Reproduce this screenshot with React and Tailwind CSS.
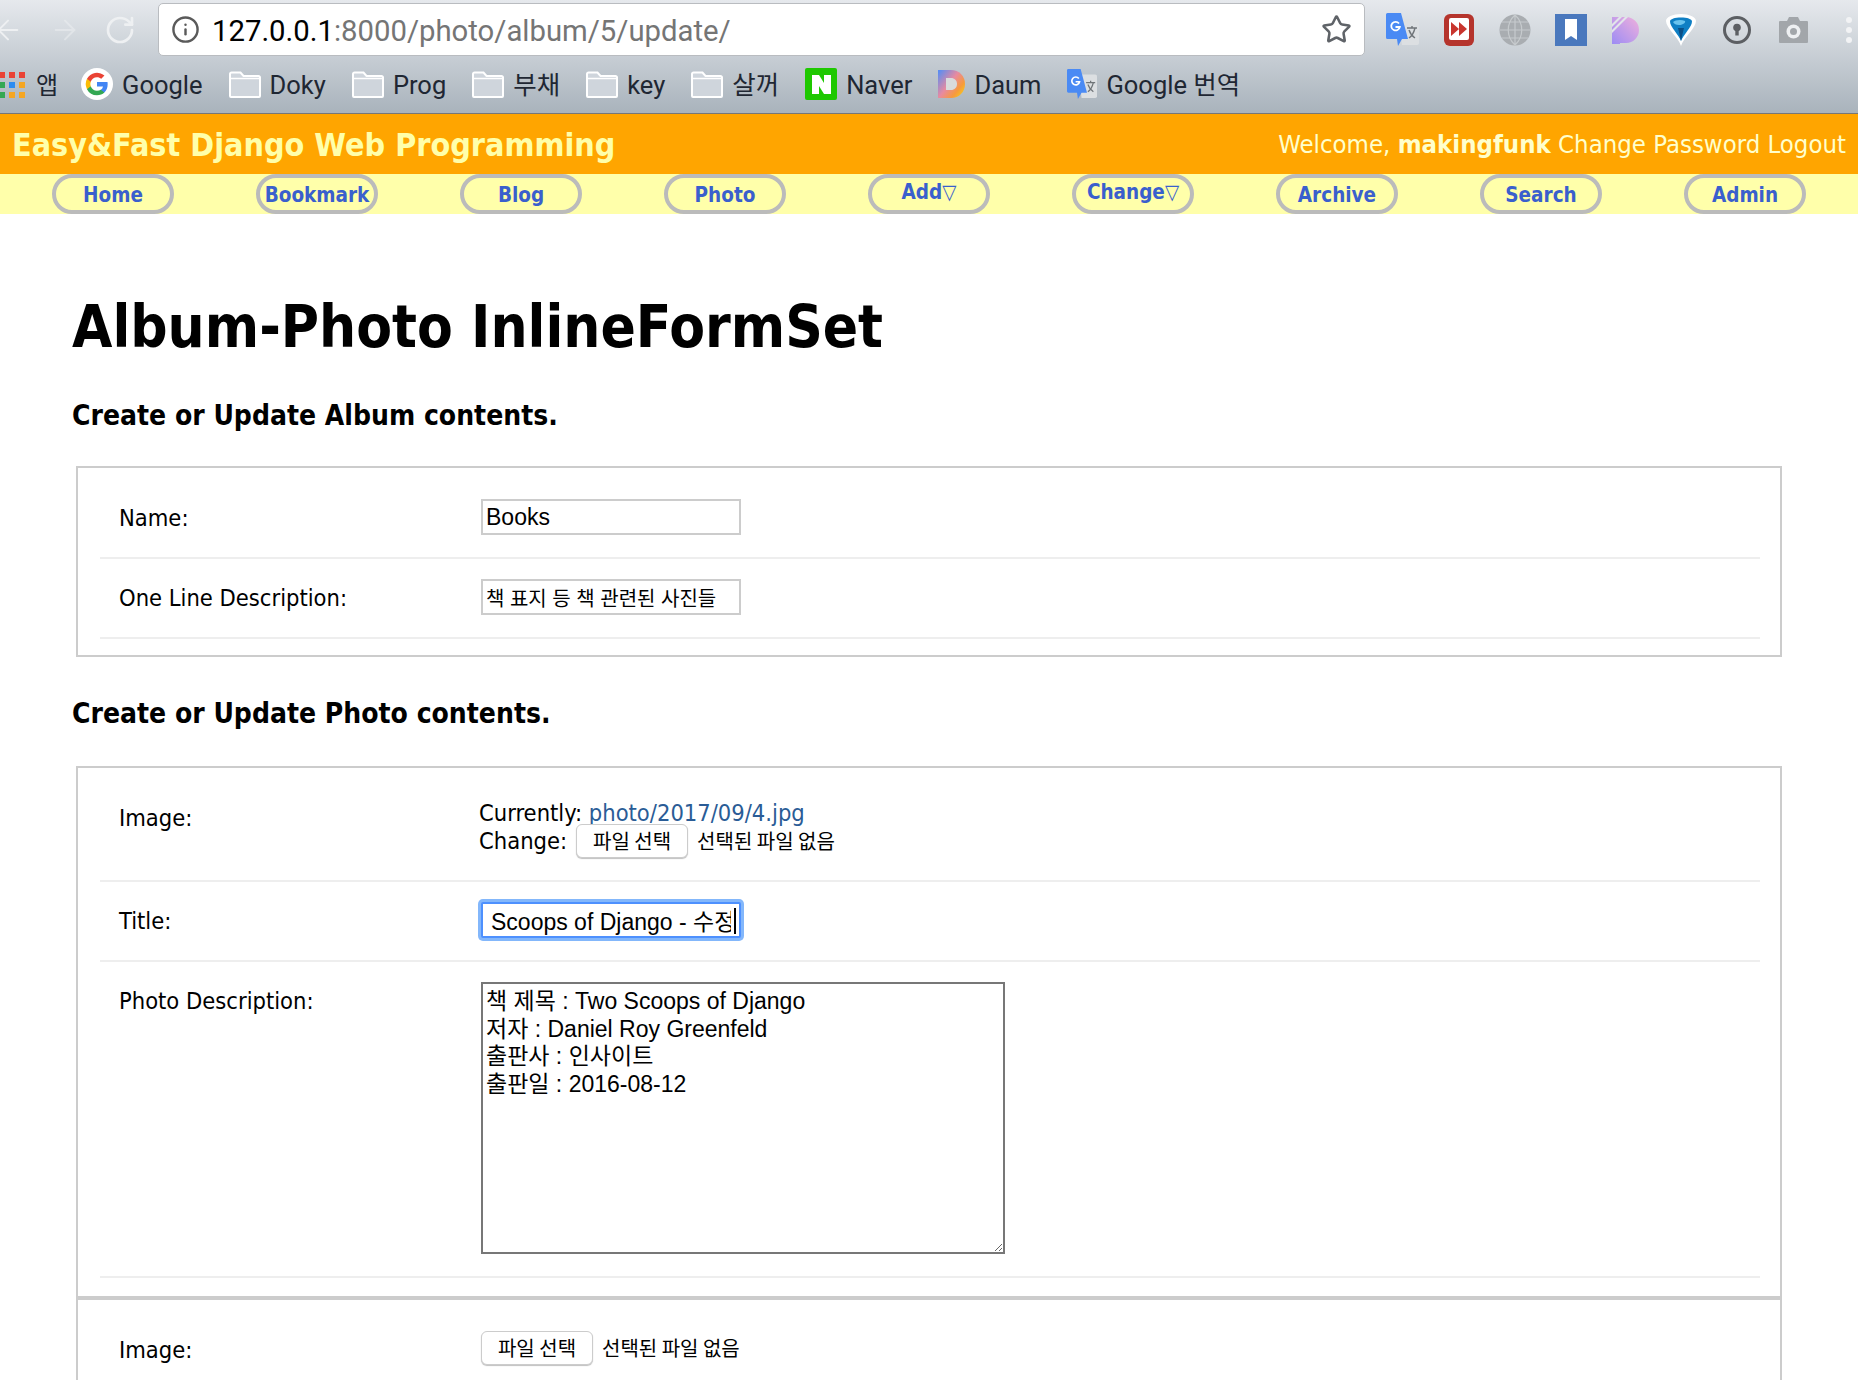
import React from "react";
import { ArrowLeft, ArrowRight, RotateCw, Star, Info } from "lucide-react";

const folderIcon = (
  <svg width="32" height="27" viewBox="0 0 32 27" className="shrink-0">
    <path d="M1 25V3a1.500 1.500 0 0 1 1.500-1.500h9l3 3.500h15A1.500 1.500 0 0 1 31 6.500V25a1 1 0 0 1-1 1H2a1 1 0 0 1-1-1z" fill="#cfd5dc" stroke="#fff" strokeWidth="2" />
    <path d="M1 7.500h30" stroke="#fff" strokeWidth="1.500" />
  </svg>
);

const TranslateIcon = ({ size = 33 }) => (
  <svg width={size} height={size} viewBox="0 0 33 33" className="shrink-0">
    <path d="M13 6h18a2 2 0 0 1 2 2v22a2 2 0 0 1-2 2H16z" fill="#dcdfe2" />
    <path d="M1.500 0H15l7 26H16l-4 7-1-7H1.500A1.500 1.500 0 0 1 0 24.500v-23A1.500 1.500 0 0 1 1.500 0z" fill="#4a8af4" />
    <path d="M13 10.500a4.300 4.300 0 1 0 .8 3.500H9.500" fill="none" stroke="#fff" strokeWidth="1.800" />
    <path d="M21 15h10M26 13v2M23 25c3-2 5-6 6-10M23 17c1 3 3 6 6 8" fill="none" stroke="#6f7478" strokeWidth="1.400" />
  </svg>
);

const GoogleIcon = () => (
  <svg width="32" height="32" viewBox="0 0 48 48" className="shrink-0">
    <circle cx="24" cy="24" r="24" fill="#fff" />
    <path d="M40 24.500c0-1.200-.1-2.300-.3-3.400H24v6.500h9a7.700 7.700 0 0 1-3.300 5v4.200h5.400c3.100-2.900 4.900-7.100 4.900-12.300z" fill="#4285f4" />
    <path d="M24 41c4.500 0 8.300-1.500 11.100-4.100l-5.400-4.200c-1.500 1-3.400 1.600-5.700 1.600-4.400 0-8.100-3-9.400-6.900H9v4.300A17 17 0 0 0 24 41z" fill="#34a853" />
    <path d="M14.600 27.400a10 10 0 0 1 0-6.800v-4.300H9a17 17 0 0 0 0 15.400z" fill="#fbbc05" />
    <path d="M24 13.700c2.500 0 4.700.9 6.400 2.500l4.800-4.800A17 17 0 0 0 9 16.300l5.600 4.300c1.300-3.900 5-6.900 9.400-6.900z" fill="#ea4335" />
  </svg>
);

const AppsIcon = () => (
  <svg width="26" height="27" viewBox="0 0 26 27" className="shrink-0">
    {[
      ["#ea4335", "#ea4335", "#ea4335"],
      ["#34a853", "#2d8cf0", "#f5a623"],
      ["#34a853", "#f5a623", "#f5a623"],
    ].map((row, r) =>
      row.map((c, i) => <rect key={`${r}-${i}`} x={i * 10 - 1} y={r * 10 + 1} width="6" height="6" fill={c} />)
    )}
  </svg>
);

const NaverIcon = () => (
  <div className="w-8 h-8 shrink-0 rounded-[2px] bg-[#1ec800] flex items-center justify-center">
    <svg width="19" height="19" viewBox="0 0 19 19">
      <path d="M0 0h7l5 8V0h7v19h-7L7 11v8H0z" fill="#fff" />
    </svg>
  </div>
);

const DaumIcon = () => (
  <svg width="27" height="28" viewBox="0 0 27 28" className="shrink-0">
    <defs>
      <linearGradient id="daum" x1="0" x2="1" y1="0.100" y2="0.900">
        <stop offset="0" stopColor="#5d8df0" />
        <stop offset="0.450" stopColor="#e88aa0" />
        <stop offset="0.750" stopColor="#f79a3c" />
        <stop offset="1" stopColor="#f6d216" />
      </linearGradient>
    </defs>
    <path d="M0 0h13c8 0 14 6 14 14s-6 14-14 14H0z" fill="url(#daum)" />
    <path d="M8 8h5c3.500 0 6 2.500 6 6s-2.500 6-6 6H8z" fill="#d9dbdc" />
  </svg>
);

const bookmarks = [
  { icon: <GoogleIcon />, label: "Google" },
  { icon: folderIcon, label: "Doky" },
  { icon: folderIcon, label: "Prog" },
  { icon: folderIcon, label: "부채" },
  { icon: folderIcon, label: "key" },
  { icon: folderIcon, label: "살꺼" },
  { icon: <NaverIcon />, label: "Naver" },
  { icon: <DaumIcon />, label: "Daum" },
  { icon: <TranslateIcon size={30} />, label: "Google 번역" },
];

const navItems = ["Home", "Bookmark", "Blog", "Photo", "Add▽", "Change▽", "Archive", "Search", "Admin"];

const BrowserChrome = () => (
  <div className="h-[113px] bg-gradient-to-b from-[#e6e9ed] to-[#a9b3bc] overflow-hidden font-['Roboto','Noto_Sans_CJK_KR',sans-serif]">
    {/* toolbar */}
    <div className="h-[59px] pt-[3px] flex items-start">
      <div className="w-[158px] h-[53px] flex items-center shrink-0 text-[#eef0f2]">
        <ArrowLeft size={32} strokeWidth={1.500} className="ml-[-8px]" />
        <ArrowRight size={32} strokeWidth={1.500} className="ml-[25px] opacity-50" />
        <RotateCw size={32} strokeWidth={2} className="ml-[23px]" />
      </div>
      <div className="w-[1207px] h-[53px] shrink-0 bg-white border border-[#b9bcc0] rounded-[5px] flex items-center pl-[12px] pr-[12px]">
        <Info size={29} strokeWidth={2} className="text-[#5a5a5a] shrink-0" />
        <div className="ml-[12px] pt-[4px] text-[29.300px] text-[#757575] leading-none">
          <span className="text-black">127.0.0.1</span>:8000/photo/album/5/update/
        </div>
        <Star size={31} strokeWidth={2} className="ml-auto text-[#5f6368]" />
      </div>
      <div className="flex items-center h-[53px] ml-[21px]">
        <TranslateIcon />
        <svg width="30" height="32" viewBox="0 0 30 32" className="ml-[25px]">
          <rect x="0" y="0" width="30" height="32" rx="6" fill="#b5342c" />
          <rect x="5" y="4" width="20" height="22" rx="2" fill="#fff" />
          <path d="M7 8l8 7-8 7zM15 8l8 7-8 7z" fill="#c8352e" />
        </svg>
        <svg width="32" height="32" viewBox="0 0 32 32" className="ml-[25px]">
          <circle cx="16" cy="16" r="15.500" fill="#a9adb1" />
          <path d="M1 16h30M3 8h26M3 24h26M16 1v30M16 1c-9 8-9 22 0 30M16 1c9 8 9 22 0 30" fill="none" stroke="#c6cacd" strokeWidth="1.200" />
        </svg>
        <svg width="32" height="32" viewBox="0 0 32 32" className="ml-[24px]">
          <rect width="32" height="32" fill="#4a78bd" />
          <path d="M10 5h12v21l-6-4-6 4z" fill="#fff" />
        </svg>
        <svg width="27" height="28" viewBox="0 0 27 28" className="ml-[25px]">
          <defs>
            <linearGradient id="pat" x1="1" x2="0" y1="0" y2="1">
              <stop offset="0" stopColor="#f0b0dc" />
              <stop offset="1" stopColor="#9c8cf4" />
            </linearGradient>
          </defs>
          <path d="M0 1h14a13 13 0 0 1 0 26H8v1H0z" fill="url(#pat)" />
          <path d="M0 8l7-7h3L0 11zM0 14L13 1h3L0 17z" fill="#e2e5ea" />
        </svg>
        <svg width="32" height="32" viewBox="0 0 32 32" className="ml-[26px]">
          <path d="M16 32C14 24 1 14 1 7c0-4 7-7 15-7s15 3 15 7c0 7-13 17-15 25z" fill="#fff" />
          <path d="M16 27C14 21 5 13 5 7.500 5 5 10 3.500 16 3.500S27 5 27 7.500C27 13 18 21 16 27z" fill="#0f7fc4" />
          <path d="M8 8c2-2 8-3 12-1 1 2-3 4-6 4S9 10 8 8z" fill="#69c3ee" />
          <path d="M16 27c-1-5-2-9-3-13h6c-1 4-2 8-3 13z" fill="#0a4f86" />
        </svg>
        <svg width="28" height="28" viewBox="0 0 28 28" className="ml-[26px]">
          <circle cx="14" cy="14" r="12.500" fill="none" stroke="#5c5f63" strokeWidth="3" />
          <circle cx="14" cy="11.500" r="3.800" fill="#5c5f63" />
          <rect x="12.300" y="12" width="3.400" height="7.500" fill="#5c5f63" />
        </svg>
        <svg width="29" height="28" viewBox="0 0 29 28" className="ml-[28px]">
          <path d="M1 5h7l2-4h9l2 4h7a1 1 0 0 1 1 1v20a1 1 0 0 1-1 1H1a1 1 0 0 1-1-1V6a1 1 0 0 1 1-1z" fill="#a2a6aa" />
          <circle cx="14.500" cy="15.500" r="7" fill="#eef0f2" />
          <circle cx="14.500" cy="15.500" r="3.500" fill="#a2a6aa" />
        </svg>
        <div className="ml-[38px] flex flex-col gap-[4px]">
          <div className="w-[6px] h-[6px] rounded-full bg-[#f2f3f5]" />
          <div className="w-[6px] h-[6px] rounded-full bg-[#f2f3f5]" />
          <div className="w-[6px] h-[6px] rounded-full bg-[#f2f3f5]" />
        </div>
      </div>
    </div>
    {/* bookmarks bar */}
    <div className="h-[54px] flex items-center text-[25.500px] text-[#1f2733] pb-[4px]">
      <AppsIcon />
      <span className="ml-[10px] mr-[23px] pt-[3px] text-[24px]">앱</span>
      <div className="flex items-center gap-[26px]">
        {bookmarks.map((b) => (
          <div key={b.label} className="flex items-center gap-[9px] whitespace-nowrap">
            {b.icon}
            <span className="pt-[3px]">{b.label}</span>
          </div>
        ))}
      </div>
    </div>
  </div>
);

const SiteHeader = () => (
  <div className="font-['DejaVu_Sans_Condensed','DejaVu_Sans',sans-serif] [font-stretch:condensed]">
    <div className="h-[61px] bg-[#ffa500] border-t border-[#777] flex items-center justify-between px-[12px]">
      <div className="pt-[2px] text-[32px] font-bold text-[#ffffaa] leading-none">Easy&amp;Fast Django Web Programming</div>
      <div className="pt-[2px] text-[25.500px] text-[#ffffcc] leading-none whitespace-nowrap">
        Welcome, <b>makingfunk</b> Change Password Logout
      </div>
    </div>
    <div className="h-[40px] bg-[#ffffaa] flex gap-[82px] pl-[52px]">
      {navItems.map((item) => (
        <div
          key={item}
          className={`w-[122px] h-[40px] border-[4px] border-[#bbb] rounded-[20px] flex justify-center text-[20.500px] font-bold text-[#3a5fcd] leading-none ${item.endsWith("▽") ? "pt-[4px]" : "pt-[7px]"}`}
        >
          {item}
        </div>
      ))}
    </div>
  </div>
);

const Row = ({ label, children, last }) => (
  <div className={`flex pt-[20px] pb-[22px] ${last ? "" : "border-b-2 border-[#eee]"}`}>
    <label className="w-[381px] shrink-0 pl-[19px] pt-[6px] text-[23.500px] text-black leading-[26px]">{label}</label>
    {children}
  </div>
);

const inputCls = "block w-[260px] h-[36px] border-2 border-[#ccc] bg-white px-[3px] text-black outline-none font-['Liberation_Sans','Noto_Sans_CJK_KR',sans-serif]";

const FileField = () => (
  <div className="flex items-center gap-[9px] font-['Noto_Sans_CJK_KR',sans-serif] [font-stretch:normal] text-[20px] leading-none text-black">
    <button className="h-[34px] w-[112px] shrink-0 rounded-[6px] border border-[#ccc] shadow-[0_1px_1px_rgba(0,0,0,0.25)] bg-white text-[20px] text-black leading-none">
      파일 선택
    </button>
    <span>선택된 파일 없음</span>
  </div>
);

export default function App() {
  return (
    <div className="w-[1858px] h-[1380px] overflow-hidden bg-white">
      <BrowserChrome />
      <SiteHeader />

      <main className="font-['DejaVu_Sans_Condensed','DejaVu_Sans','Noto_Sans_CJK_KR',sans-serif] [font-stretch:condensed] pl-[72px]">
        <h1 className="pt-[78px] text-[58px] font-bold leading-[70px] text-black">Album-Photo InlineFormSet</h1>
        <h3 className="mt-[37px] text-[28px] font-bold leading-[34px] text-black">Create or Update Album contents.</h3>

        <section className="mt-[33px] ml-[4px] w-[1706px] border-2 border-[#ccc] pl-[22px] pr-[20px] pt-[11px] pb-[16px]">
          <Row label="Name:">
            <input readOnly value="Books" className={`${inputCls} text-[23px]`} />
          </Row>
          <Row label="One Line Description:">
            <input readOnly value="책 표지 등 책 관련된 사진들" className={`${inputCls} text-[20px]`} />
          </Row>
        </section>

        <h3 className="mt-[40px] text-[28px] font-bold leading-[34px] text-black">Create or Update Photo contents.</h3>

        <section className="mt-[35px] ml-[4px] w-[1706px] border-2 border-b-0 border-[#ccc]">
          <div className="pl-[22px] pr-[20px] pt-[11px] pb-[18px]">
            <Row label="Image:">
              <div className="text-[23.500px] leading-[28px] text-black -ml-[2px]">
                <div className="h-[25px]">
                  Currently: <a className="text-[#2a5c96]">photo/2017/09/4.jpg</a>
                </div>
                <div className="h-[34px] flex items-center gap-[9px]">
                  <span>Change:</span>
                  <FileField />
                </div>
              </div>
            </Row>
            <Row label="Title:">
              <div className="relative">
                <input
                  readOnly
                  value="Scoops of Django - 수정"
                  className="block w-[260px] h-[36px] border-2 border-[#4d90fe] rounded-[2px] bg-white px-[8px] text-[23px] text-black outline-none shadow-[0_0_0_3px_rgba(100,165,250,0.8)] font-['Liberation_Sans','Noto_Sans_CJK_KR',sans-serif]"
                />
                <span className="absolute left-[253px] top-[6px] w-[2px] h-[26px] bg-black" />
              </div>
            </Row>
            <Row label="Photo Description:">
              <textarea
                readOnly
                value={"책 제목 : Two Scoops of Django\n저자 : Daniel Roy Greenfeld\n출판사 : 인사이트\n출판일 : 2016-08-12"}
                className="block w-[524px] h-[272px] border-2 border-[#777] px-[3px] pt-[4px] text-[23px] leading-[27.600px] text-black outline-none font-['Liberation_Sans','Noto_Sans_CJK_KR',sans-serif]"
              />
            </Row>
          </div>
          <div className="border-t-4 border-[#ccc] pl-[22px] pr-[20px] pt-[11px]">
            <Row label="Image:" last>
              <FileField />
            </Row>
          </div>
        </section>
      </main>
    </div>
  );
}
